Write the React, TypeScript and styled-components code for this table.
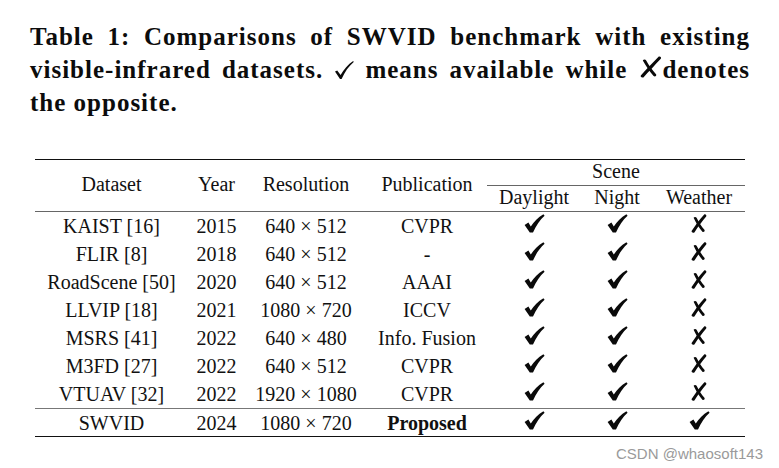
import React from "react";
import styled, { createGlobalStyle } from "styled-components";

const GlobalStyle = createGlobalStyle`
  html, body {
    margin: 0;
    padding: 0;
    background: #ffffff;
  }
`;

interface Row {
  name: string;
  year: string;
  res: string;
  pub: string;
  scene: boolean[];
  ours?: boolean;
}

const rows: Row[] = [
  { name: "KAIST [16]", year: "2015", res: "640 × 512", pub: "CVPR", scene: [true, true, false] },
  { name: "FLIR [8]", year: "2018", res: "640 × 512", pub: "-", scene: [true, true, false] },
  { name: "RoadScene [50]", year: "2020", res: "640 × 512", pub: "AAAI", scene: [true, true, false] },
  { name: "LLVIP [18]", year: "2021", res: "1080 × 720", pub: "ICCV", scene: [true, true, false] },
  { name: "MSRS [41]", year: "2022", res: "640 × 480", pub: "Info. Fusion", scene: [true, true, false] },
  { name: "M3FD [27]", year: "2022", res: "640 × 512", pub: "CVPR", scene: [true, true, false] },
  { name: "VTUAV [32]", year: "2022", res: "1920 × 1080", pub: "CVPR", scene: [true, true, false] },
  { name: "SWVID", year: "2024", res: "1080 × 720", pub: "Proposed", scene: [true, true, true], ours: true },
];

const Page = styled.div`
  width: 779px;
  height: 468px;
  box-sizing: border-box;
  padding: 20px 29px 0 30px;
  display: flex;
  flex-direction: column;
  font-family: "Liberation Serif", "Times New Roman", serif;
  color: #111;
`;

const Caption = styled.div`
  font-weight: bold;
  font-size: 25px;
  line-height: 33px;
  letter-spacing: 1px;
  color: #0c0c0c;
`;

const CaptionLine = styled.div<{ $justify?: boolean }>`
  text-align: ${({ $justify }) => ($justify ? "justify" : "left")};
  text-align-last: ${({ $justify }) => ($justify ? "justify" : "left")};
  white-space: nowrap;
`;

const Table = styled.table`
  margin: 40px 0 0 5px;
  width: 710px;
  border-collapse: collapse;
  table-layout: fixed;
  font-size: 20px;
  border-top: 1.2px solid #111;
  border-bottom: 1.2px solid #111;
`;

const Th = styled.th<{ $rule?: boolean }>`
  font-weight: normal;
  text-align: center;
  padding: 0 0 3px;
  height: 22px;
  line-height: 22px;
  vertical-align: middle;
  border-bottom: ${({ $rule }) => ($rule ? "1.6px solid #666" : "none")};
`;

const Td = styled.td`
  text-align: center;
  padding: 0;
  height: 28px;
  line-height: 22px;
  vertical-align: middle;
`;

const BodyRow = styled.tr<{ $ours?: boolean }>`
  border-top: ${({ $ours }) => ($ours ? "1.4px solid #777" : "none")};
  td {
    height: ${({ $ours }) => ($ours ? "27px" : "28px")};
  }
`;

const Bold = styled.span`
  font-weight: bold;
`;

const Mark = styled.svg<{ $lift?: number }>`
  display: inline-block;
  vertical-align: middle;
  margin-top: ${({ $lift }) => `${-($lift ?? 9)}px`};
`;

const Watermark = styled.div`
  align-self: flex-end;
  margin: 8px -13px 0 0;
  font-family: "Liberation Sans", Arial, sans-serif;
  font-size: 15px;
  color: #9a9a9a;
`;

const Check = () => (
  <Mark width="21" height="19" viewBox="0 0 21 19">
    <path
      d="M0.6 11 L4.4 8.6 L6.8 12.6 C10 7.6 14 3.4 19.4 0.3 L20.6 1.8 C16 6 12.2 11.2 9 18.6 L5.8 18.6 Z"
      fill="#0a0a0a"
    />
  </Mark>
);

const Cross = () => (
  <Mark width="16" height="19" viewBox="0 0 16 19">
    <path
      d="M13.2 0.4 C14.8 0 15.8 1.2 15.2 2.4 C11.4 7 7.2 12.4 3.4 18.4 C2.2 19 0.4 18.6 0.6 17 C4.4 11 8.8 5.2 13.2 0.4 Z"
      fill="#0a0a0a"
    />
    <path
      d="M2.6 3.8 C3.2 2.6 5 2.6 5.6 3.8 C7.8 8.2 10.4 12.4 13.6 16 C14 17.4 12.8 18.4 11.4 17.8 C8.2 14.2 5.2 9.4 2.6 3.8 Z"
      fill="#0a0a0a"
    />
  </Mark>
);

const LightCheck = () => (
  <Mark width="20" height="20" viewBox="0 0 20 20" $lift={4}>
    <path
      d="M1 11.5 L3.2 10.4 L6.6 15 C9.8 9.6 14 4.4 19.2 1 L19.7 2 C14.8 6.2 10.8 11.8 7.6 19 L6 19 Z"
      fill="#0a0a0a"
    />
  </Mark>
);

const BigCross = () => (
  <Mark width="24" height="22" viewBox="0 0 24 22" $lift={10}>
    <path
      d="M20.8 0.6 C22.6 0.2 23.6 1.6 22.8 2.8 C17.2 8.8 10.8 15.6 5.4 21.4 C4 22 2.2 21.2 2.8 19.6 C8.2 13.4 14.8 6.6 20.8 0.6 Z"
      fill="#0a0a0a"
    />
    <path
      d="M4.8 4.6 C5.6 3.2 7.6 3.4 8.2 4.6 C11 9.6 14.2 14.2 18.2 18.4 C18.6 20 17 21 15.6 20 C11.6 15.6 8.2 10.4 4.8 4.6 Z"
      fill="#0a0a0a"
    />
  </Mark>
);

const SceneMark = ({ ok }: { ok: boolean }) => (ok ? <Check /> : <Cross />);

const App = () => (
  <>
    <GlobalStyle />
    <Page>
      <Caption>
        <CaptionLine $justify>Table 1: Comparisons of SWVID benchmark with existing</CaptionLine>
        <CaptionLine $justify>
          visible-infrared datasets. <LightCheck /> means available while <BigCross />denotes
        </CaptionLine>
        <CaptionLine>the opposite.</CaptionLine>
      </Caption>

      <Table>
        <colgroup>
          <col style={{ width: 153 }} />
          <col style={{ width: 57 }} />
          <col style={{ width: 122 }} />
          <col style={{ width: 120 }} />
          <col style={{ width: 94 }} />
          <col style={{ width: 72 }} />
          <col style={{ width: 92 }} />
        </colgroup>
        <thead>
          <tr>
            <Th rowSpan={2} $rule>Dataset</Th>
            <Th rowSpan={2} $rule>Year</Th>
            <Th rowSpan={2} $rule>Resolution</Th>
            <Th rowSpan={2} $rule>Publication</Th>
            <Th colSpan={3} $rule>Scene</Th>
          </tr>
          <tr>
            <Th $rule>Daylight</Th>
            <Th $rule>Night</Th>
            <Th $rule>Weather</Th>
          </tr>
        </thead>
        <tbody>
          {rows.map((r) => (
            <BodyRow key={r.name} $ours={r.ours}>
              <Td>{r.name}</Td>
              <Td>{r.year}</Td>
              <Td>{r.res}</Td>
              <Td>{r.ours ? <Bold>{r.pub}</Bold> : r.pub}</Td>
              {r.scene.map((ok, i) => (
                <Td key={i}>
                  <SceneMark ok={ok} />
                </Td>
              ))}
            </BodyRow>
          ))}
        </tbody>
      </Table>

      <Watermark>CSDN @whaosoft143</Watermark>
    </Page>
  </>
);

export default App;
